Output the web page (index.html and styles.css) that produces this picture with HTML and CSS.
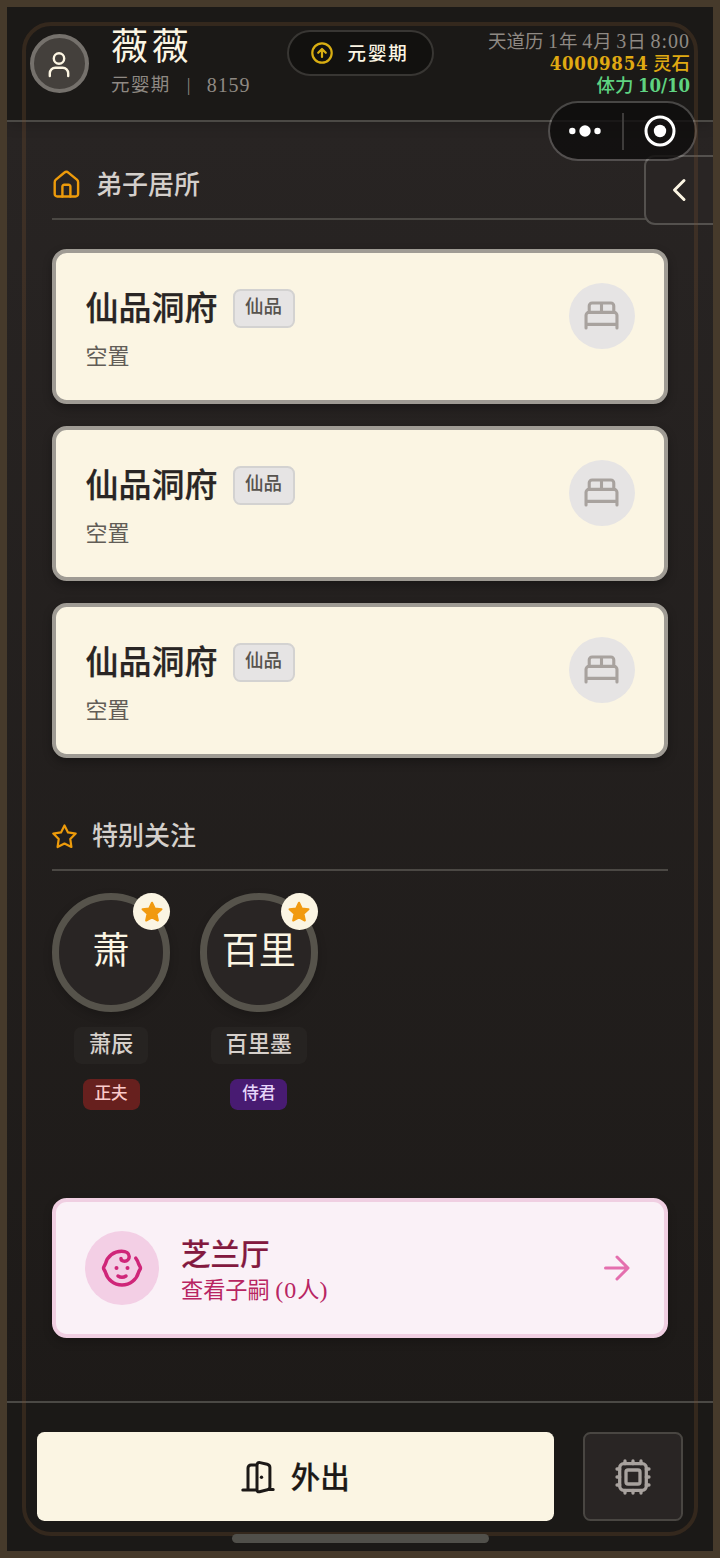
FILE: index.html
```html
<!DOCTYPE html>
<html lang="zh-CN">
<head>
<meta charset="utf-8">
<title>弟子居所</title>
<link rel="stylesheet" href="styles.css">
</head>
<body>
<div class="app">
  <header class="top">
    <div class="avatar"><svg width="24" height="30" viewBox="0 0 24 30"><circle cx="12" cy="7.500" r="5.200"/><path d="M2.800 25v-2.700a5.500 5.500 0 0 1 5.500-5.500h7.400a5.500 5.500 0 0 1 5.500 5.500V25"/></svg></div>
    <div class="who">
      <div class="name">薇薇</div>
      <div class="rank"><span>元婴期</span><span>|</span><span class="num">8159</span></div>
    </div>
    <div class="stage"><svg width="22" height="22" viewBox="0 0 22 22"><circle cx="11" cy="11" r="9.700"/><path d="M11 15V7.500M7.200 10.800 11 7l3.800 3.800"/></svg><span>元婴期</span></div>
    <div class="stats">
      <div class="date">天道历 <span class="num">1</span>年 <span class="num">4</span>月 <span class="num">3</span>日 <span class="num">8:00</span></div>
      <div class="gold"><span class="num">40009854</span> 灵石</div>
      <div class="energy">体力 <span class="num">10/10</span></div>
    </div>
  </header>

  <main class="content">
    <h2 class="section-title"><svg width="29" height="30" viewBox="0 0 29 30"><path d="M2.700 12.200c0-1 .4-1.900 1.200-2.600l8.300-6.800a3.400 3.400 0 0 1 4.400 0l8.300 6.800c.8.700 1.200 1.600 1.200 2.600V24a2.500 2.500 0 0 1-2.500 2.500H5.200A2.500 2.500 0 0 1 2.700 24z"/><path d="M10.400 26.500v-10a1.800 1.800 0 0 1 1.800-1.800h4.400a1.800 1.800 0 0 1 1.800 1.800v10"/></svg><span>弟子居所</span></h2>
    <div class="rooms">
      <article class="room">
        <div><div class="room-head"><h3>仙品洞府</h3><span class="grade">仙品</span></div><p>空置</p></div>
        <div class="bed"><svg width="35" height="29" viewBox="0 0 36 30"><path d="M2 28V14.800a3 3 0 0 1 3-3h26a3 3 0 0 1 3 3V28M2 24.200h32M5.300 11.800V5a3 3 0 0 1 3-3h19.400a3 3 0 0 1 3 3v6.800M18 2v9.800"/></svg></div>
      </article>
      <article class="room">
        <div><div class="room-head"><h3>仙品洞府</h3><span class="grade">仙品</span></div><p>空置</p></div>
        <div class="bed"><svg width="35" height="29" viewBox="0 0 36 30"><path d="M2 28V14.800a3 3 0 0 1 3-3h26a3 3 0 0 1 3 3V28M2 24.200h32M5.300 11.800V5a3 3 0 0 1 3-3h19.400a3 3 0 0 1 3 3v6.800M18 2v9.800"/></svg></div>
      </article>
      <article class="room">
        <div><div class="room-head"><h3>仙品洞府</h3><span class="grade">仙品</span></div><p>空置</p></div>
        <div class="bed"><svg width="35" height="29" viewBox="0 0 36 30"><path d="M2 28V14.800a3 3 0 0 1 3-3h26a3 3 0 0 1 3 3V28M2 24.200h32M5.300 11.800V5a3 3 0 0 1 3-3h19.400a3 3 0 0 1 3 3v6.800M18 2v9.800"/></svg></div>
      </article>
    </div>

    <h2 class="section-title starred"><svg width="25" height="25" viewBox="0 0 25 25"><path d="m12.500 1.500 3.500 6.900 7.700 1.200-5.400 5.500 1.100 7.900-6.900-3.500L5.600 23l1.100-7.900-5.400-5.500L9 8.400z"/></svg><span>特别关注</span></h2>
    <div class="people">
      <div class="person">
        <div class="face">萧<span class="fav"><svg width="22" height="22" viewBox="0 0 25 25"><path d="m12.500 2 3.100 6.500 7.600.9-5.600 5.200 1.500 7.500-6.600-3.600-6.600 3.600 1.500-7.500-5.600-5.200 7.600-.9z"/></svg></span></div>
        <div class="label">萧辰</div>
        <div class="role red">正夫</div>
      </div>
      <div class="person">
        <div class="face">百里<span class="fav"><svg width="22" height="22" viewBox="0 0 25 25"><path d="m12.500 2 3.100 6.500 7.600.9-5.600 5.200 1.500 7.500-6.600-3.600-6.600 3.600 1.500-7.500-5.600-5.200 7.600-.9z"/></svg></span></div>
        <div class="label">百里墨</div>
        <div class="role purple">侍君</div>
      </div>
    </div>

    <div class="hall">
      <div class="baby"><svg width="42" height="40" viewBox="0 0 42 40"><path d="M34.800 10.200c1.300 1.700 2.200 3.500 2.700 5.400.3 1 .7 1.700 1.300 2.500.8 1.200.8 2.600 0 3.800-.6.800-1 1.500-1.300 2.500C35.600 31.700 29 37 21 37S6.400 31.700 4.500 24.400c-.3-1-.7-1.700-1.300-2.500-.8-1.200-.8-2.600 0-3.800.6-.8 1-1.500 1.300-2.500C6.400 8.300 13 3.300 20.500 3.300c4.800 0 7.700 2 7.700 5.100 0 2.800-2 4.800-4.600 4.800-2.200 0-3.600-1-3.600-2.600"/><path d="M17 28c2.300 1.500 5.700 1.500 8 0"/><circle class="dot" cx="15.500" cy="20" r="2"/><circle class="dot" cx="26.500" cy="20" r="2"/></svg></div>
      <div class="hall-text"><h3>芝兰厅</h3><p>查看子嗣 <span class="num">(0</span>人<span class="num">)</span></p></div>
      <svg class="arrow" width="28" height="28" viewBox="0 0 28 28"><path d="M2.500 14h22M14 3l11 11-11 11"/></svg>
    </div>
  </main>

  <footer class="actions">
    <button class="go"><svg width="34" height="34" viewBox="0 0 34 34"><path d="M1.800 30H15M27 29.500h5.200M7 30V8a3 3 0 0 1 3-3h6M16 5.200c0-2 1.200-3 3-2.600l7.200 1.600c1.700.4 2.700 1.500 2.700 3.300V27c0 1.500-.9 2.300-2.500 2.700l-7.900 2c-1.600.4-2.500-.3-2.500-1.900z"/><circle class="dot" cx="20.500" cy="17.300" r="1.700"/></svg><span>外出</span></button>
    <button class="chip"><svg width="36" height="36" viewBox="0 0 36 36"><rect x="4.700" y="4.700" width="26.600" height="26.600" rx="4"/><rect x="11" y="11" width="14" height="14" rx="2"/><path d="M10 4.700V2M18 4.700V2M26 4.700V2M10 34v-2.700M18 34v-2.700M26 34v-2.700M4.700 10H2M4.700 18H2M4.700 26H2M34 10h-2.700M34 18h-2.700M34 26h-2.700"/></svg></button>
  </footer>

  <button class="drawer"><svg width="18" height="26" viewBox="0 0 18 26"><path d="M14 3.500 4.500 13l9.500 9.500"/></svg></button>
  <div class="capsule"><svg width="32" height="14" viewBox="0 0 32 14"><circle cx="3.300" cy="7" r="3.200"/><circle cx="16" cy="7" r="5.700"/><circle cx="28.500" cy="7" r="3.200"/></svg><i></i><svg width="32" height="32" viewBox="0 0 32 32"><circle class="ring" cx="16" cy="16" r="14"/><circle cx="16" cy="16" r="6.200"/></svg></div>
  <div class="frame-line"></div>
  <div class="home-bar"></div>
</div>
</body>
</html>
```
FILE: styles.css
```css
* { box-sizing: border-box; }
body, h2, h3, p { margin: 0; }
body { font-family: "Liberation Serif", "Noto Sans CJK SC", sans-serif; background: #463a2b; }
svg { display: block; flex: none; fill: none; stroke: currentColor; stroke-width: 2.4; stroke-linecap: round; stroke-linejoin: round; }
button { font: inherit; padding: 0; margin: 0; }
.app { position: relative; width: 720px; height: 1558px; border: 7px solid #463a2b; background: linear-gradient(#292524, #1c1917); display: flex; flex-direction: column; overflow: hidden; }

.top { height: 115px; flex: none; background: #1b1917; border-bottom: 2px solid #4b4945; padding: 23px 23px 0; display: flex; align-items: flex-start; box-shadow: 0 4px 12px rgba(0,0,0,.15); }
.avatar { width: 59px; height: 59px; margin-top: 4px; border: 4px solid #75716c; border-radius: 50%; background: #44403c; color: #fdf6e3; display: grid; place-items: center; padding: 4px 2px 0 0; }
.who { margin-left: 22px; width: 175.500px; color: #fbf5e3; }
.name { font-size: 37px; line-height: 38px; letter-spacing: 3.700px; margin-top: -1px; }
.rank { display: flex; font-size: 18.500px; line-height: 24px; letter-spacing: 1.400px; color: #8f8983; margin-top: 6px; }
.rank span + span { margin-left: 16px; }
.rank .num { font-size: 20px; letter-spacing: .9px; margin-left: 15px; }
.stage { width: 147px; height: 46px; border: 2px solid #383633; border-radius: 23px; background: #12110f; display: flex; align-items: center; padding-left: 22px; gap: 15px; font-size: 18.500px; font-weight: 500; letter-spacing: 1.900px; color: #fbf5e3; }
.stage span { margin-top: -2px; }
.stage svg { color: #d9ae12; stroke-width: 2.2; }
.stats { margin-left: auto; text-align: right; font-size: 18.500px; line-height: 22.200px; white-space: nowrap; color: #8f8983; }
.stats > div { height: 22.200px; }
.stats .num { font-size: 20px; letter-spacing: 1px; }
.gold, .energy { font-weight: 500; position: relative; top: 1px; }
.gold { color: #e0aa12; }
.energy { color: #5fd381; }
.stats .gold .num, .stats .energy .num { font-family: "DejaVu Serif Condensed", "DejaVu Serif", serif; font-stretch: condensed; font-weight: 700; font-size: 18.500px; letter-spacing: .75px; }
.stats .energy .num { letter-spacing: -.1px; }

.content { flex: 1; padding: 41px 45px 0; }
.section-title { height: 57px; border-bottom: 2px solid #4b4844; display: flex; align-items: flex-start; gap: 15px; font-size: 26px; line-height: 46px; font-weight: 500; color: #d4cfcb; }
.section-title svg { color: #ed9b0b; margin-top: 7px; }
.rooms { display: grid; gap: 22.200px; padding-top: 29px; }
.room { height: 155px; border: 4px solid #9f9b94; border-radius: 14.800px; background: #fbf5e3; display: flex; justify-content: space-between; padding: 29.500px; box-shadow: 0 4px 10px rgba(0,0,0,.3); }
.room-head { display: flex; align-items: center; gap: 15px; height: 52px; }
.room h3 { font-size: 33px; line-height: 52px; font-weight: 500; color: #292524; -webkit-text-stroke: .25px currentColor; }
.grade { width: 62px; height: 39px; border: 2px solid #d3d2d1; border-radius: 7.400px; background: #e6e4e4; color: #57534e; font-size: 18.500px; line-height: 33px; text-align: center; font-weight: 500; }
.room p { font-size: 22px; line-height: 32px; color: #625d57; margin-top: 6px; }
.bed { width: 66px; height: 66px; border-radius: 50%; background: #e6e4e4; color: #a8a29e; display: grid; place-items: center; }
.bed svg { stroke-width: 3.2; }
.starred { margin-top: 56px; }
.starred svg { margin-top: 10px; stroke-width: 2.2; }
.people { display: flex; gap: 29.500px; padding-top: 22px; height: 327px; }
.person { width: 118.200px; display: flex; flex-direction: column; align-items: center; }
.face { position: relative; width: 118.200px; height: 118.200px; border: 7.400px solid #56534b; border-radius: 50%; background: #292524; color: #fbf5e3; font-size: 37px; line-height: 104px; text-align: center; box-shadow: 0 4px 10px rgba(0,0,0,.2); }
.fav { position: absolute; top: -7px; right: -7px; width: 37px; height: 37px; border-radius: 50%; background: #fbf5e3; color: #f19a10; display: grid; place-items: center; }
.fav path { fill: currentColor; }
.label { margin-top: 15px; padding: 0 14.800px; height: 37px; border-radius: 7.400px; background: #262321; color: #d6d0cb; font-size: 22.200px; line-height: 36px; font-weight: 500; }
.role { margin-top: 15px; width: 57px; height: 31px; border-radius: 7.400px; font-size: 16.600px; line-height: 30px; text-align: center; font-weight: 500; }
.red { background: #67201e; color: #fbcaca; }
.purple { background: #481b72; color: #e6d5fa; }
.hall { height: 140px; border: 4px solid #f0cfe2; border-radius: 14.800px; background: #faf1f7; display: flex; align-items: center; padding: 0 33px 0 29px; box-shadow: 0 4px 10px rgba(0,0,0,.2); }
.baby { width: 74px; height: 74px; border-radius: 50%; background: #f3cfe5; color: #cf2679; display: grid; place-items: center; }
.baby svg { stroke-width: 3.5; }
svg .dot { fill: currentColor; stroke: none; }
.hall-text { margin-left: 22px; padding-top: 8px; }
.hall h3 { font-size: 29.500px; line-height: 36px; font-weight: 500; color: #83193f; -webkit-text-stroke: .2px currentColor; }
.hall p { font-size: 22.200px; line-height: 35px; color: #b82562; white-space: pre; }
.hall .num { font-size: 24px; letter-spacing: 1px; }
.arrow { margin-left: auto; color: #e46fae; stroke-width: 3; }

.actions { height: 150px; flex: none; border-top: 2px solid #4b4945; background: #1b1917; padding: 29px 30px 0; display: flex; gap: 29.500px; }
.go { flex: 1; height: 89px; border: 0; border-radius: 7.400px; background: #fbf5e3; color: #1c1917; display: flex; align-items: center; justify-content: center; gap: 16px; font-size: 29.500px; font-weight: 500; }
.go span { margin-top: -4px; -webkit-text-stroke: .2px currentColor; }
.go svg { stroke-width: 3; }
.chip { width: 100px; height: 89px; border: 2px solid #494642; border-radius: 7.400px; background: #292524; color: #a8a29e; display: grid; place-items: center; }
.chip svg { stroke-width: 3.3; }
.drawer { position: absolute; right: 0; top: 148px; width: 69px; height: 70px; border: 2px solid #54514e; border-right: 0; border-radius: 11px 0 0 11px; background: #292524; color: #fbf5e3; padding-left: 24px; }
.drawer svg { stroke-width: 3; }
.capsule { position: absolute; left: 541px; top: 94px; width: 149px; height: 60px; border: 2px solid rgba(255,255,255,.2); border-radius: 30px; background: rgba(14,13,12,.8); background-clip: padding-box; display: flex; align-items: center; color: #fff; padding-left: 18.500px; }
.capsule circle { fill: currentColor; stroke: none; }
.capsule .ring { fill: none; stroke: currentColor; stroke-width: 3; }
.capsule i { width: 2px; height: 37px; background: #3e3c3b; margin: 0 20.500px 0 21px; }
.frame-line { position: absolute; inset: 15px; border: 4px solid rgba(120,80,45,.28); border-radius: 29px; pointer-events: none; }
.home-bar { position: absolute; left: 225px; bottom: 8px; width: 257px; height: 9.500px; border-radius: 5px; background: #504f4a; }
```
